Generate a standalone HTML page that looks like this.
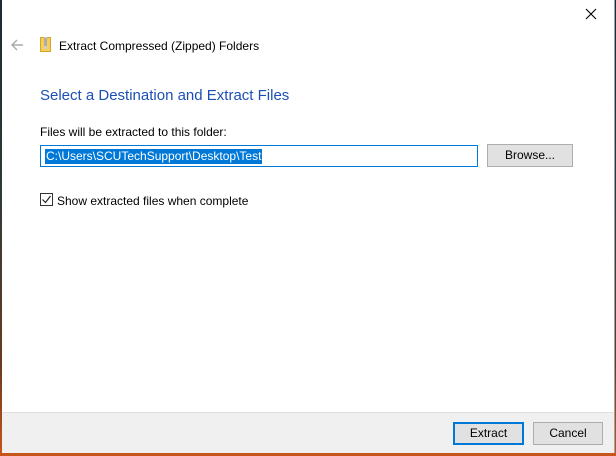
<!DOCTYPE html>
<html><head><style>
body{margin:0;width:616px;height:456px;overflow:hidden;background:linear-gradient(#1e2a30,#2a3a3a 40%,#6a3a20 80%,#c8561a);font-family:"Liberation Sans",sans-serif;font-size:12px;color:#000;position:relative}
.win{position:absolute;left:2px;top:0;width:612px;height:453px;background:#fff;border-right:1px solid #9aa4ad}
.a{position:absolute;white-space:nowrap}
.footer{position:absolute;left:0;right:0;top:412px;bottom:0;background:#f0f0f0;border-top:1px solid #dfdfdf}
.btn{position:absolute;height:21px;background:#e1e1e1;border:1px solid #adadad;text-align:center;line-height:21px;font-size:12px}
</style></head><body>
<div class="win">
<svg class="a" style="left:583px;top:8px" width="12" height="12"><path d="M1 1L11 11M11 1L1 11" stroke="#000" stroke-width="1.1"/></svg>
<svg class="a" style="left:8px;top:39px" width="14" height="12"><path d="M13 6H2M7 1L2 6L7 11" stroke="#aaa" stroke-width="1.4" fill="none"/></svg>
<svg class="a" style="left:38px;top:36px" width="12" height="16"><rect x="0.5" y="1.5" width="10" height="14" fill="#f4cf5a" stroke="#d4a52a"/><rect x="4" y="1" width="3" height="12" fill="#cfcfcf"/><path d="M4 3h3M4 5h3M4 7h3M4 9h3" stroke="#888"/></svg>
<div class="a" style="left:57px;top:39px;font-size:12px">Extract Compressed (Zipped) Folders</div>
<div class="a" style="left:38px;top:87px;font-size:15px;color:#1c4fb5">Select a Destination and Extract Files</div>
<div class="a" style="left:38px;top:125px">Files will be extracted to this folder:</div>
<div class="a" style="left:38px;top:145px;width:436px;height:20px;border:1px solid #0078d7"><span style="position:absolute;left:4px;top:3px;background:#0078d7;color:#fff;line-height:15px;padding:0 1px">C:\Users\SCUTechSupport\Desktop\Test</span></div>
<div class="btn" style="left:485px;top:144px;width:84px">Browse...</div>
<div class="a" style="left:38px;top:193px;width:11px;height:11px;border:1px solid #333"><svg width="11" height="11" style="position:absolute;left:0;top:0"><path d="M1.5 5.5L4.5 8.5L9.5 2" stroke="#222" stroke-width="1.2" fill="none"/></svg></div>
<div class="a" style="left:55px;top:194px">Show extracted files when complete</div>
<div class="footer">
<div class="btn" style="left:451px;top:9px;width:67px;border:2px solid #0078d7;height:19px;line-height:19px">Extract</div>
<div class="btn" style="left:531px;top:9px;width:68px">Cancel</div>
</div>
</div>
</body></html>
